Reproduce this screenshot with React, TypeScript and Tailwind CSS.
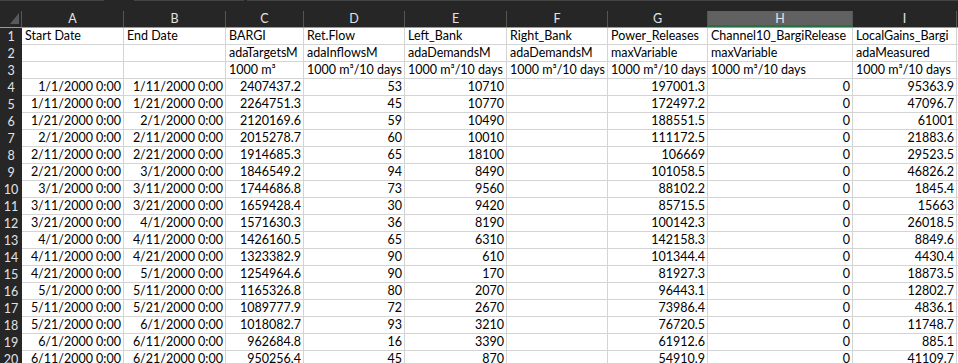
const COLS = ['A', 'B', 'C', 'D', 'E', 'F', 'G', 'H', 'I', '']

const WIDTHS = ['w-[102px]', 'w-[102px]', 'w-[78px]', 'w-[101px]', 'w-[102px]', 'w-[101px]', 'w-[100px]', 'w-[145px]', 'w-[104px]', 'w-[80px]']

const HEAD: string[][] = [
  ['Start Date', 'End Date', 'BARGI', 'Ret.Flow', 'Left_Bank', 'Right_Bank', 'Power_Releases', 'Channel10_BargiRelease', 'LocalGains_Bargi', ''],
  ['', '', 'adaTargetsM', 'adaInflowsM', 'adaDemandsM', 'adaDemandsM', 'maxVariable', 'maxVariable', 'adaMeasured', ''],
  ['', '', '1000 m³', '1000 m³/10 days', '1000 m³/10 days', '1000 m³/10 days', '1000 m³/10 days', '1000 m³/10 days', '1000 m³/10 days', ''],
]

const DATA: string[][] = [
  ['1/1/2000 0:00', '1/11/2000 0:00', '2407437.2', '53', '10710', '', '197001.3', '0', '95363.9', ''],
  ['1/11/2000 0:00', '1/21/2000 0:00', '2264751.3', '45', '10770', '', '172497.2', '0', '47096.7', ''],
  ['1/21/2000 0:00', '2/1/2000 0:00', '2120169.6', '59', '10490', '', '188551.5', '0', '61001', ''],
  ['2/1/2000 0:00', '2/11/2000 0:00', '2015278.7', '60', '10010', '', '111172.5', '0', '21883.6', ''],
  ['2/11/2000 0:00', '2/21/2000 0:00', '1914685.3', '65', '18100', '', '106669', '0', '29523.5', ''],
  ['2/21/2000 0:00', '3/1/2000 0:00', '1846549.2', '94', '8490', '', '101058.5', '0', '46826.2', ''],
  ['3/1/2000 0:00', '3/11/2000 0:00', '1744686.8', '73', '9560', '', '88102.2', '0', '1845.4', ''],
  ['3/11/2000 0:00', '3/21/2000 0:00', '1659428.4', '30', '9420', '', '85715.5', '0', '15663', ''],
  ['3/21/2000 0:00', '4/1/2000 0:00', '1571630.3', '36', '8190', '', '100142.3', '0', '26018.5', ''],
  ['4/1/2000 0:00', '4/11/2000 0:00', '1426160.5', '65', '6310', '', '142158.3', '0', '8849.6', ''],
  ['4/11/2000 0:00', '4/21/2000 0:00', '1323382.9', '90', '610', '', '101344.4', '0', '4430.4', ''],
  ['4/21/2000 0:00', '5/1/2000 0:00', '1254964.6', '90', '170', '', '81927.3', '0', '18873.5', ''],
  ['5/1/2000 0:00', '5/11/2000 0:00', '1165326.8', '80', '2070', '', '96443.1', '0', '12802.7', ''],
  ['5/11/2000 0:00', '5/21/2000 0:00', '1089777.9', '72', '2670', '', '73986.4', '0', '4836.1', ''],
  ['5/21/2000 0:00', '6/1/2000 0:00', '1018082.7', '93', '3210', '', '76720.5', '0', '11748.7', ''],
  ['6/1/2000 0:00', '6/11/2000 0:00', '962684.8', '16', '3390', '', '61912.6', '0', '885.1', ''],
  ['6/11/2000 0:00', '6/21/2000 0:00', '950256.4', '45', '870', '', '54910.9', '0', '41109.7', ''],
]

function RowNum({ n }: { n: number }) {
  return (
    <div className="w-[22px] shrink-0 h-[17px] bg-[#262626] text-[#e3e3e3] flex items-center justify-center leading-[16px]">
      {n}
    </div>
  )
}

function Row({ n, cells, right }: { n: number; cells: string[]; right: boolean }) {
  return (
    <div className="flex">
      <RowNum n={n} />
      {cells.map((c, i) => (
        <div key={i}
          className={`${WIDTHS[i]} shrink-0 h-[17px] border-r border-b border-[#d4d4d4] bg-white text-black leading-[16px] whitespace-nowrap overflow-hidden ${right ? 'text-right pr-[2px]' : 'text-left pl-[3px]'}`}
        >
          {c}
        </div>
      ))}
    </div>
  )
}

export default function App() {
  return (
    <div className="w-[958px] h-[363px] overflow-hidden bg-[#262626] text-[12.5px] select-none" style={{ fontFamily: 'Lato, "Liberation Sans", sans-serif' }}>
      {/* formula bar edge */}
      <div className="flex h-[11px]">
        <div className="w-[104px] border-t border-[#444]" />
        <div className="w-[30px]" />
        <div className="w-[110px] border-t border-[#444]" />
        <div className="w-[3px]" />
        <div className="flex-1 border-t border-[#444]" />
      </div>

      {/* column letters */}
      <div className="flex h-[17px] border-b border-[#9a9a9a]">
        <div className="w-[22px] shrink-0 relative border-r border-[#555]">
          <div className="absolute left-[10px] top-[2px] w-0 h-0 border-l-[9px] border-l-transparent border-b-[11px] border-b-[#595959]" />
        </div>
        {COLS.map((c, i) => (
          <div key={i}
            className={`${WIDTHS[i]} shrink-0 flex items-center justify-center text-[#e3e3e3] border-r border-[#555] ${c === 'H' ? 'bg-[#616161] border-b-2 border-b-[#217346] pt-[2px]' : ''}`}
          >
            {c}
          </div>
        ))}
      </div>

      {HEAD.map((r, i) => <Row key={i} n={i + 1} cells={r} right={false} />)}
      {DATA.map((r, i) => <Row key={i} n={i + 4} cells={r} right={true} />)}
    </div>
  )
}
